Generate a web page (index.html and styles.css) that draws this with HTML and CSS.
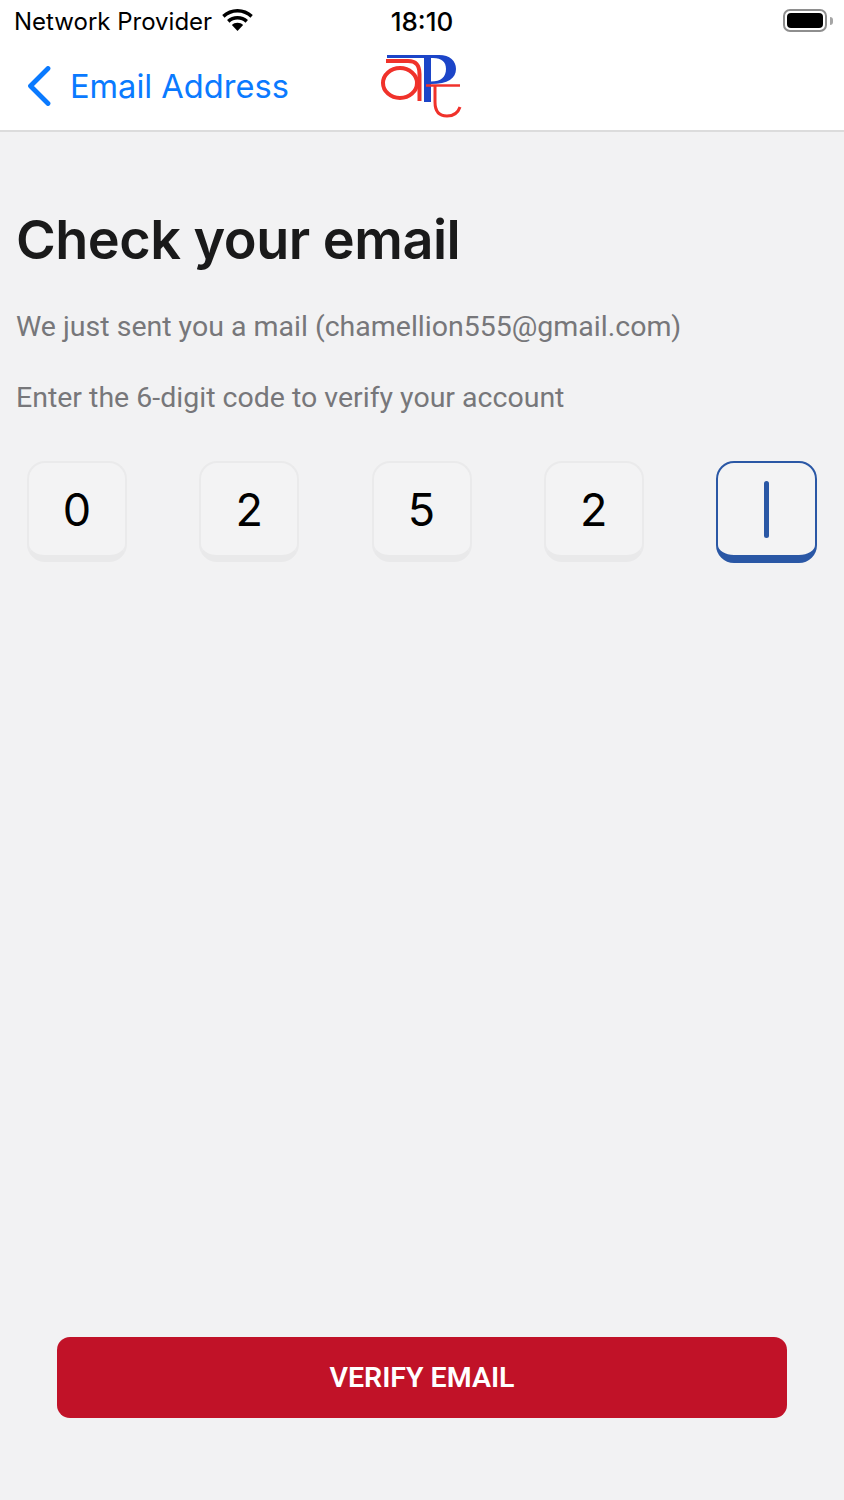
FILE: index.html
```html
<!DOCTYPE html>
<html lang="en">
<head>
<meta charset="utf-8">
<title>Check your email</title>
<link rel="stylesheet" href="styles.css">
</head>
<body>
<div class="screen">
  <header class="header">
    <div class="status">
      <div class="status-left">
        <span class="carrier">Network Provider</span>
        <svg class="wifi" width="31" height="22" viewBox="2 1 28 20"><path d="M16 4.2c4.6 0 8.700 1.800 11.800 4.700l2.100-2.400C26.200 3 21.300 1 16 1S5.800 3 2.100 6.500l2.100 2.400C7.300 6 11.400 4.200 16 4.200z" fill="#000"/><path d="M16 10.600c2.800 0 5.300 1.100 7.300 2.800l2.200-2.400C23 8.700 19.600 7.300 16 7.300S9 8.700 6.500 11l2.200 2.400c2-1.700 4.500-2.800 7.300-2.800z" fill="#000"/><path d="M16 13.500c-2 0-3.800.8-5.100 2L16 21l5.100-5.500c-1.300-1.200-3.100-2-5.100-2z" fill="#000"/></svg>
      </div>
      <span class="time">18:10</span>
      <div class="battery"><span class="battery-body"><span class="battery-fill"></span></span><span class="battery-cap"></span></div>
    </div>
    <nav class="nav">
      <a class="back">
        <svg class="chevron" width="26" height="40" viewBox="0 0 26 40"><path d="M22 2.500 4.500 20 22 37.500" fill="none" stroke="#0a7aff" stroke-width="4.800" stroke-linecap="round" stroke-linejoin="round"/></svg>
        <span class="back-label">Email Address</span>
      </a>
      <svg class="logo" width="84" height="68" viewBox="0 0 84 68" aria-label="APE logo">
        <defs><filter id="soft" x="-5%" y="-5%" width="110%" height="110%"><feGaussianBlur stdDeviation="0.45"/></filter></defs>
        <g filter="url(#soft)" fill="none">
          <path d="M6 3H58C69 3 75 9 75 17C75 26 67 32 50 32V29.500C60 29.500 65 25 65 17C65 10 61 6 52 6H6Z" fill="#1c44c8"/>
          <path d="M46.500 4V50" stroke="#1c44c8" stroke-width="7"/>
          <path d="M5 9H27C35 9 38.500 13 38.500 22V49" stroke="#f0302c" stroke-width="4"/>
          <ellipse cx="19" cy="31" rx="17" ry="15" stroke="#f0302c" stroke-width="4"/>
          <path d="M45 33.500H79" stroke="#f0302c" stroke-width="2.500"/>
          <path d="M54 33.500V50C54 60 59 64 66 64C72 64 77 61 79 55" stroke="#f0302c" stroke-width="3"/>
        </g>
      </svg>
    </nav>
  </header>
  <main class="content">
    <h1 class="title">Check your email</h1>
    <p class="sub first">We just sent you a mail (chamellion555@gmail.com)</p>
    <p class="sub second">Enter the 6-digit code to verify your account</p>
    <div class="otp">
      <div class="cell">0</div>
      <div class="cell">2</div>
      <div class="cell">5</div>
      <div class="cell">2</div>
      <div class="cell active"><span class="caret"></span></div>
    </div>
    <div class="actions">
      <button class="verify">VERIFY EMAIL</button>
    </div>
  </main>
</div>
</body>
</html>
```

FILE: styles.css
```css
* { box-sizing: border-box; }
html, body { margin: 0; padding: 0; }
body { background: #f2f2f3; font-family: "Roboto", sans-serif; }
.screen { width: 844px; height: 1500px; display: flex; flex-direction: column; }
.header { height: 132px; background: #fff; border-bottom: 2px solid #dcdcdc; flex: none; }
.status { height: 42px; position: relative; display: flex; justify-content: space-between; align-items: center; padding: 2px 14px 0; font-family: "Inter", sans-serif; color: #000; }
.status-left { display: flex; align-items: center; gap: 10px; }
.carrier { font-size: 24px; line-height: 40px; }
.wifi { margin-top: -4px; }
.time { position: absolute; left: 0; right: 0; top: 1px; text-align: center; font-size: 26px; font-weight: 500; line-height: 42px; }
.battery { display: flex; align-items: center; gap: 3px; margin-right: -3px; margin-top: -3px; }
.battery-body { width: 44px; height: 23px; border: 2px solid #8e8e8e; border-radius: 7px; padding: 2px; display: block; }
.battery-fill { display: block; height: 100%; background: #000; border-radius: 4px; }
.battery-cap { width: 3px; height: 8px; background: #a5a5a5; border-radius: 0 3px 3px 0; }
.nav { height: 88px; position: relative; display: flex; align-items: center; padding-left: 26px; }
.back { display: flex; align-items: center; gap: 18px; color: #0a7aff; margin-top: -1px; }
.back-label { font-family: "Inter", sans-serif; font-size: 32.6px; line-height: 40px; }
.logo { position: absolute; left: 381px; top: 10px; }
.content { flex: 1; display: flex; flex-direction: column; padding: 0 27px; }
.title { margin: 73px 0 0 -11px; font-family: "Inter", sans-serif; font-weight: 600; font-size: 54px; letter-spacing: -0.5px; line-height: 70px; color: #1a1a1a; }
.sub { margin: 0 0 0 -11px; font-size: 28.5px; line-height: 36px; color: #77777a; }
.first { margin-top: 34px; }
.second { margin-top: 35px; }
.otp { display: flex; justify-content: space-between; margin-top: 45px; }
.cell { width: 100px; height: 101px; border-radius: 18px; background: #f3f3f4; border: 2px solid #eaeaeb; border-bottom: 7px solid #e9e9ea; display: flex; align-items: center; justify-content: center; padding-top: 1px; font-family: "Inter", sans-serif; font-size: 45px; color: #000; }
.active { width: 101px; height: 102px; padding-top: 0; border: 2.500px solid #2a57a5; border-bottom: 8px solid #2a57a5; }
.caret { width: 5px; height: 57px; background: #2a57a5; border-radius: 3px; }
.actions { margin-top: auto; padding: 0 30px 82px; }
.verify { display: block; width: 100%; height: 81px; border: 0; border-radius: 13px; background: #c11228; color: #fff; font-family: "Roboto", sans-serif; font-weight: 600; font-size: 28.5px; }
```
